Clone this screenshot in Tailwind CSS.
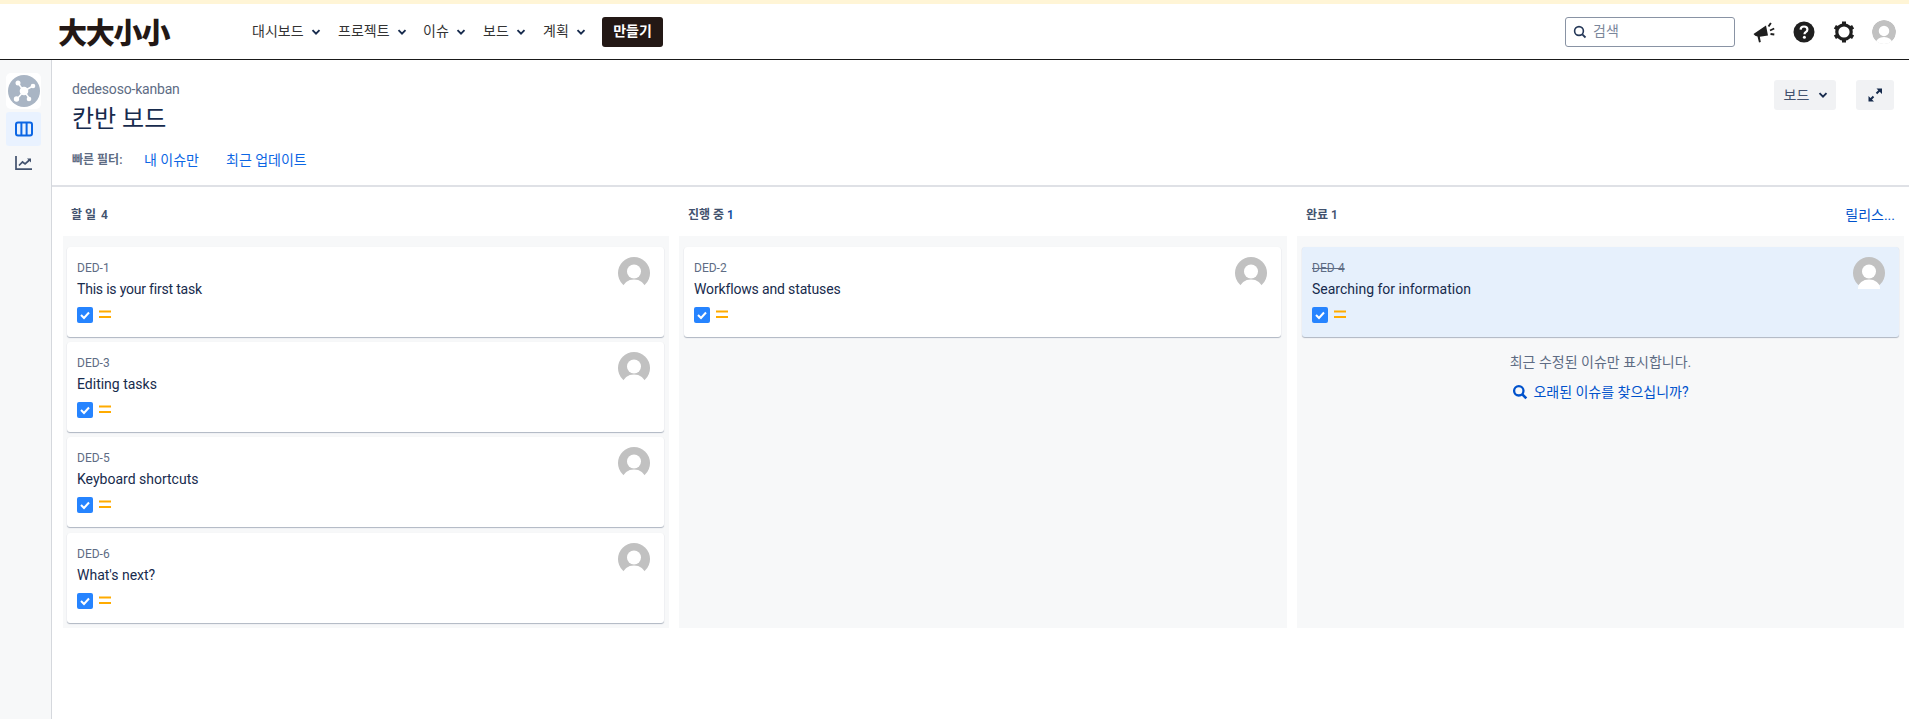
<!doctype html>
<html lang="ko">
<head>
<meta charset="utf-8">
<title>칸반 보드</title>
<script src="https://cdn.jsdelivr.net/npm/@tailwindcss/browser@4"></script>
</head>
<body class="bg-white overflow-hidden font-['Roboto','Noto_Sans_CJK_KR',sans-serif] text-[14px] text-[#172b4d]">
<div class="h-[719px] flex flex-col">
  <div class="h-[4px] bg-[#fff5d6]"></div>
  <header class="h-[56px] flex items-center border-b-[1px] border-[#1a1a1a] pl-[58px] pr-[13px]">
    <div class="w-[194px] h-[40px] flex items-center font-['Noto_Sans_CJK_KR',sans-serif] font-black text-[#231815] text-[29px] leading-none tracking-[-1.200px] whitespace-nowrap">大大小小</div>
    <nav class="flex items-center text-[#333333] text-[14px]">
      <a class="flex items-center w-[86px]">대시보드<svg class="ml-[7px]" width="10" height="10" viewBox="0 0 10 10"><path d="M1.500 3.200 5 6.700l3.500-3.500" fill="none" stroke="#172b4d" stroke-width="1.900"/></svg></a>
      <a class="flex items-center w-[85px]">프로젝트<svg class="ml-[7px]" width="10" height="10" viewBox="0 0 10 10"><path d="M1.500 3.200 5 6.700l3.500-3.500" fill="none" stroke="#172b4d" stroke-width="1.900"/></svg></a>
      <a class="flex items-center w-[60px]">이슈<svg class="ml-[7px]" width="10" height="10" viewBox="0 0 10 10"><path d="M1.500 3.200 5 6.700l3.500-3.500" fill="none" stroke="#172b4d" stroke-width="1.900"/></svg></a>
      <a class="flex items-center w-[60px]">보드<svg class="ml-[7px]" width="10" height="10" viewBox="0 0 10 10"><path d="M1.500 3.200 5 6.700l3.500-3.500" fill="none" stroke="#172b4d" stroke-width="1.900"/></svg></a>
      <a class="flex items-center w-[58px]">계획<svg class="ml-[7px]" width="10" height="10" viewBox="0 0 10 10"><path d="M1.500 3.200 5 6.700l3.500-3.500" fill="none" stroke="#172b4d" stroke-width="1.900"/></svg></a>
    </nav>
    <button class="ml-[1px] w-[61px] h-[30px] rounded-[3px] bg-[#231815] text-white font-bold text-[14px]">만들기</button>
    <div class="flex-1"></div>
    <div class="w-[170px] h-[30px] rounded-[3px] border border-[#8993a4] flex items-center pl-[6px] text-[#7a869a]">
      <svg width="16" height="16" viewBox="0 0 16 16"><circle cx="7" cy="7" r="4.400" fill="none" stroke="#253858" stroke-width="1.600"/><path d="m10.300 10.300 3.200 3.200" stroke="#253858" stroke-width="1.800"/></svg>
      <span class="ml-[5px]">검색</span>
    </div>
    <div class="w-[41px] flex justify-end">
      <svg width="24" height="24" viewBox="0 0 24 24"><path d="M1.500 14 14 5.500l2 10-8.200 1.200L8.800 22l-1.800.4-1.500-6-2.300-.6z" fill="#1f1f1f"/><path d="m16.500 6.500 2.400-3.500M18 10.500l4.200-2M18.500 14l3.800.5" stroke="#1f1f1f" stroke-width="1.900" fill="none"/></svg>
    </div>
    <div class="ml-[16px] w-[24px] h-[24px]">
      <svg width="24" height="24" viewBox="0 0 24 24"><circle cx="12" cy="12" r="10.500" fill="#1f1f1f"/><path d="M8.600 9.600C8.700 7.600 10.100 6.500 12 6.500c2 0 3.400 1.200 3.400 2.900 0 1.400-.8 2.100-1.700 2.800-.8.600-1.200 1-1.200 2" fill="none" stroke="#fff" stroke-width="2.200"/><circle cx="12.400" cy="17.300" r="1.500" fill="#fff"/></svg>
    </div>
    <div class="ml-[16px] w-[24px] h-[24px]">
      <svg width="24" height="24" viewBox="0 0 24 24"><circle cx="12" cy="12" r="7.200" fill="none" stroke="#1f1f1f" stroke-width="3.200"/><g stroke="#1f1f1f" stroke-width="4"><path d="M12 1.500v3.500M12 19v3.500M2.900 6.700l3 1.800M18.100 15.500l3 1.800M2.900 17.300l3-1.800M18.100 8.500l3-1.800"/></g></svg>
    </div>
    <div class="ml-[16px] w-[24px] h-[24px] rounded-full overflow-hidden">
      <svg width="24" height="24" viewBox="0 0 32 32"><circle cx="16" cy="16" r="16" fill="#c1c1c1"/><circle cx="16" cy="14.500" r="7" fill="#fff"/><ellipse cx="16" cy="31" rx="11" ry="8.500" fill="#fff"/></svg>
    </div>
  </header>

  <div class="flex-1 flex min-h-0">
    <aside class="w-[52px] shrink-0 bg-[#f7f8f9] border-r border-[#d5d8dd] flex flex-col items-start pl-[6px] pt-[13px]">
      <div class="w-[35px] h-[36px] bg-white rounded-[5px] flex items-center justify-center">
        <svg width="32" height="32" viewBox="0 0 32 32"><circle cx="16" cy="16" r="16" fill="#a9b5c4"/><g stroke="#fff" stroke-width="1.500"><path d="M15 15 10 8M16 16l9-5M16 16l-7 8M16 16l5 7"/></g><circle cx="16" cy="16" r="4.300" fill="#fff"/><circle cx="10" cy="8" r="2.500" fill="#fff"/><circle cx="25" cy="11" r="2.300" fill="#fff"/><circle cx="8.500" cy="24" r="2.700" fill="#fff"/><circle cx="21" cy="24" r="2.300" fill="#fff"/></svg>
      </div>
      <div class="mt-[3px] w-[35px] h-[34px] rounded-[3px] bg-[#e9f2ff] flex items-center justify-center">
        <svg width="18" height="16" viewBox="0 0 18 16"><rect x="1" y="1.500" width="16" height="13" rx="2" fill="none" stroke="#0c66e4" stroke-width="2"/><path d="M6.400 1.500v13M11.600 1.500v13" stroke="#0c66e4" stroke-width="2"/></svg>
      </div>
      <div class="mt-[8px] w-[35px] h-[18px] flex items-center justify-center">
        <svg width="18" height="16" viewBox="0 0 18 16"><path d="M1 1v13.200h16" fill="none" stroke="#42526e" stroke-width="1.700"/><path d="m4 10.500 3.500-3.500 2.600 2L15 4.500" fill="none" stroke="#42526e" stroke-width="1.700"/><path d="M12 3.500h4v4z" fill="#42526e"/></svg>
      </div>
    </aside>

    <main class="flex-1 min-w-0">
      <section class="h-[127px] border-b-[2px] border-[#dfe1e6] relative pl-[20px] pr-[15px] pt-[19px]">
        <div class="flex justify-between items-start">
          <div>
            <div class="text-[#5e6c84] text-[14px] leading-[20px] tracking-[-0.200px]">dedesoso-kanban</div>
            <h1 class="mt-[4px] text-[24px] leading-[32px] font-normal text-[#172b4d]">칸반 보드</h1>
            <div class="mt-[15px] flex items-center h-[20px]">
              <span class="w-[72px] text-[12px] font-semibold text-[#5e6c84]">빠른 필터:</span>
              <a class="text-[#0c66e4] w-[82px]">내 이슈만</a>
              <a class="text-[#0c66e4]">최근 업데이트</a>
            </div>
          </div>
          <div class="mt-[1px] flex items-center gap-[20px]">
            <button class="w-[62px] h-[30px] pl-[2px] bg-[#f1f2f4] rounded-[3px] flex items-center justify-center gap-[9px] text-[14px] text-[#42526e]">보드<svg width="10" height="10" viewBox="0 0 10 10"><path d="M1.500 3.200 5 6.700l3.500-3.500" fill="none" stroke="#172b4d" stroke-width="1.900"/></svg></button>
            <button class="w-[38px] h-[30px] bg-[#f1f2f4] rounded-[3px] flex items-center justify-center"><svg width="16" height="16" viewBox="0 0 16 16"><path d="M9.500 1.500H15V7z M1.500 9V14.500H7z" fill="#172b4d"/><path d="M12.500 3.500 9.500 6.500M3.500 12.500l3-3" stroke="#172b4d" stroke-width="2"/></svg></button>
          </div>
        </div>
      </section>

      <div class="pl-[11px] pr-[5px]">
        <div class="grid grid-cols-[606px_608px_607px] gap-[10px] h-[49px] pt-[7px] items-center">
          <div class="pl-[8px] text-[12px] font-semibold text-[#42526e]">할 일 <span class="ml-[2px]">4</span></div>
          <div class="pl-[9px] text-[12px] font-semibold text-[#42526e]">진행 중 <span class="text-[#0c4a9e]">1</span></div>
          <div class="pl-[9px] pr-[9px] flex justify-between items-center">
            <span class="text-[12px] font-semibold text-[#42526e]">완료 1</span>
            <a class="text-[14px] text-[#0052cc]">릴리스...</a>
          </div>
        </div>

        <div class="grid grid-cols-[606px_608px_607px] gap-[10px] h-[392px]">
          <div class="bg-[#f7f8f9] pt-[11px] pl-[4px] pr-[5px] flex flex-col gap-[5px]">
            <article class="h-[90px] shrink-0 bg-white rounded-[3px] shadow-[0_1px_1px_rgba(9,30,66,0.3),0_0_1px_rgba(9,30,66,0.06)] pl-[10px] pr-[14px] pt-[10px] flex justify-between">
              <div>
                <div class="text-[12px] leading-[22px] text-[#5e6c84]">DED-1</div>
                <div class="text-[14px] leading-[20px] text-[#172b4d] tracking-[-0.200px]">This is your first task</div>
                <div class="mt-[8px] flex items-start gap-[6px]">
                  <svg width="16" height="16" viewBox="0 0 16 16"><rect width="16" height="16" rx="2" fill="#2684ff"/><path d="m4 8 3 3 5-5.500" fill="none" stroke="#fff" stroke-width="2"/></svg>
                  <svg class="mt-[3px]" width="12" height="9" viewBox="0 0 12 9"><path d="M0 1.500h12M0 7h12" stroke="#ffab00" stroke-width="2"/></svg>
                </div>
              </div>
              <svg width="32" height="32" viewBox="0 0 32 32"><circle cx="16" cy="16" r="16" fill="#c1c1c1"/><circle cx="16" cy="14.500" r="7" fill="#fff"/><ellipse cx="16" cy="31" rx="11" ry="8.500" fill="#fff"/></svg>
            </article>
            <article class="h-[90px] shrink-0 bg-white rounded-[3px] shadow-[0_1px_1px_rgba(9,30,66,0.3),0_0_1px_rgba(9,30,66,0.06)] pl-[10px] pr-[14px] pt-[10px] flex justify-between">
              <div>
                <div class="text-[12px] leading-[22px] text-[#5e6c84]">DED-3</div>
                <div class="text-[14px] leading-[20px] text-[#172b4d]">Editing tasks</div>
                <div class="mt-[8px] flex items-start gap-[6px]">
                  <svg width="16" height="16" viewBox="0 0 16 16"><rect width="16" height="16" rx="2" fill="#2684ff"/><path d="m4 8 3 3 5-5.500" fill="none" stroke="#fff" stroke-width="2"/></svg>
                  <svg class="mt-[3px]" width="12" height="9" viewBox="0 0 12 9"><path d="M0 1.500h12M0 7h12" stroke="#ffab00" stroke-width="2"/></svg>
                </div>
              </div>
              <svg width="32" height="32" viewBox="0 0 32 32"><circle cx="16" cy="16" r="16" fill="#c1c1c1"/><circle cx="16" cy="14.500" r="7" fill="#fff"/><ellipse cx="16" cy="31" rx="11" ry="8.500" fill="#fff"/></svg>
            </article>
            <article class="h-[90px] shrink-0 bg-white rounded-[3px] shadow-[0_1px_1px_rgba(9,30,66,0.3),0_0_1px_rgba(9,30,66,0.06)] pl-[10px] pr-[14px] pt-[10px] flex justify-between">
              <div>
                <div class="text-[12px] leading-[22px] text-[#5e6c84]">DED-5</div>
                <div class="text-[14px] leading-[20px] text-[#172b4d]">Keyboard shortcuts</div>
                <div class="mt-[8px] flex items-start gap-[6px]">
                  <svg width="16" height="16" viewBox="0 0 16 16"><rect width="16" height="16" rx="2" fill="#2684ff"/><path d="m4 8 3 3 5-5.500" fill="none" stroke="#fff" stroke-width="2"/></svg>
                  <svg class="mt-[3px]" width="12" height="9" viewBox="0 0 12 9"><path d="M0 1.500h12M0 7h12" stroke="#ffab00" stroke-width="2"/></svg>
                </div>
              </div>
              <svg width="32" height="32" viewBox="0 0 32 32"><circle cx="16" cy="16" r="16" fill="#c1c1c1"/><circle cx="16" cy="14.500" r="7" fill="#fff"/><ellipse cx="16" cy="31" rx="11" ry="8.500" fill="#fff"/></svg>
            </article>
            <article class="h-[90px] shrink-0 mt-[1px] bg-white rounded-[3px] shadow-[0_1px_1px_rgba(9,30,66,0.3),0_0_1px_rgba(9,30,66,0.06)] pl-[10px] pr-[14px] pt-[10px] flex justify-between">
              <div>
                <div class="text-[12px] leading-[22px] text-[#5e6c84]">DED-6</div>
                <div class="text-[14px] leading-[20px] text-[#172b4d]">What's next?</div>
                <div class="mt-[8px] flex items-start gap-[6px]">
                  <svg width="16" height="16" viewBox="0 0 16 16"><rect width="16" height="16" rx="2" fill="#2684ff"/><path d="m4 8 3 3 5-5.500" fill="none" stroke="#fff" stroke-width="2"/></svg>
                  <svg class="mt-[3px]" width="12" height="9" viewBox="0 0 12 9"><path d="M0 1.500h12M0 7h12" stroke="#ffab00" stroke-width="2"/></svg>
                </div>
              </div>
              <svg width="32" height="32" viewBox="0 0 32 32"><circle cx="16" cy="16" r="16" fill="#c1c1c1"/><circle cx="16" cy="14.500" r="7" fill="#fff"/><ellipse cx="16" cy="31" rx="11" ry="8.500" fill="#fff"/></svg>
            </article>
          </div>

          <div class="bg-[#f7f8f9] pt-[11px] pl-[5px] pr-[6px]">
            <article class="h-[90px] bg-white rounded-[3px] shadow-[0_1px_1px_rgba(9,30,66,0.3),0_0_1px_rgba(9,30,66,0.06)] pl-[10px] pr-[14px] pt-[10px] flex justify-between">
              <div>
                <div class="text-[12px] leading-[22px] text-[#5e6c84]">DED-2</div>
                <div class="text-[14px] leading-[20px] text-[#172b4d] tracking-[-0.150px]">Workflows and statuses</div>
                <div class="mt-[8px] flex items-start gap-[6px]">
                  <svg width="16" height="16" viewBox="0 0 16 16"><rect width="16" height="16" rx="2" fill="#2684ff"/><path d="m4 8 3 3 5-5.500" fill="none" stroke="#fff" stroke-width="2"/></svg>
                  <svg class="mt-[3px]" width="12" height="9" viewBox="0 0 12 9"><path d="M0 1.500h12M0 7h12" stroke="#ffab00" stroke-width="2"/></svg>
                </div>
              </div>
              <svg width="32" height="32" viewBox="0 0 32 32"><circle cx="16" cy="16" r="16" fill="#c1c1c1"/><circle cx="16" cy="14.500" r="7" fill="#fff"/><ellipse cx="16" cy="31" rx="11" ry="8.500" fill="#fff"/></svg>
            </article>
          </div>

          <div class="bg-[#f7f8f9] pt-[11px] pl-[5px] pr-[5px]">
            <article class="h-[90px] bg-[#e6f0fc] rounded-[3px] shadow-[0_1px_1px_rgba(9,30,66,0.3),0_0_1px_rgba(9,30,66,0.06)] pl-[10px] pr-[14px] pt-[10px] flex justify-between">
              <div>
                <div class="text-[12px] leading-[22px] text-[#5e6c84] line-through">DED-4</div>
                <div class="text-[14px] leading-[20px] text-[#172b4d]">Searching for information</div>
                <div class="mt-[8px] flex items-start gap-[6px]">
                  <svg width="16" height="16" viewBox="0 0 16 16"><rect width="16" height="16" rx="2" fill="#2684ff"/><path d="m4 8 3 3 5-5.500" fill="none" stroke="#fff" stroke-width="2"/></svg>
                  <svg class="mt-[3px]" width="12" height="9" viewBox="0 0 12 9"><path d="M0 1.500h12M0 7h12" stroke="#ffab00" stroke-width="2"/></svg>
                </div>
              </div>
              <svg width="32" height="32" viewBox="0 0 32 32"><circle cx="16" cy="16" r="16" fill="#c1c1c1"/><circle cx="16" cy="14.500" r="7" fill="#fff"/><ellipse cx="16" cy="31" rx="11" ry="8.500" fill="#fff"/></svg>
            </article>
            <div class="mt-[15px] text-center text-[14px] leading-[20px] text-[#5e6c84]">최근 수정된 이슈만 표시합니다.</div>
            <div class="mt-[10px] flex items-center justify-center gap-[5px] text-[14px] leading-[20px] text-[#0052cc]">
              <svg width="16" height="16" viewBox="0 0 16 16"><circle cx="6.800" cy="6.800" r="4.700" fill="none" stroke="#0052cc" stroke-width="2.300"/><path d="m10.300 10.300 4 4" stroke="#0052cc" stroke-width="2.600"/></svg>
              <a>오래된 이슈를 찾으십니까?</a>
            </div>
          </div>
        </div>
      </div>
    </main>
  </div>
</div>
</body>
</html>
